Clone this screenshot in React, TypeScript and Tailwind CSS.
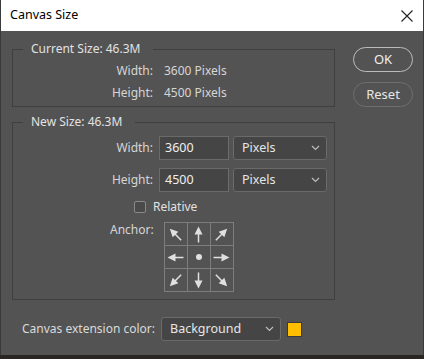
import React from "react";

const font = { fontFamily: '"Segoe UI", "Noto Sans", "Open Sans", sans-serif' };

function Chevron() {
  return (
    <svg width="9" height="6" viewBox="0 0 9 6" className="shrink-0">
      <path d="M1 1l3.5 3.5L8 1" fill="none" stroke="#bdbdbd" strokeWidth="1.2" />
    </svg>
  );
}

function Select({ value, className }: { value: string; className: string }) {
  return (
    <div
      className={`flex h-[24px] items-center justify-between rounded-[3px] border border-[#6a6a6a] bg-[#454545] pl-[8px] pr-[6px] text-[12.5px] text-[#e6e6e6] ${className}`}
    >
      <span>{value}</span>
      <Chevron />
    </div>
  );
}

// arrow pointing at the given angle, 0 = right
function Arrow({ angle }: { angle: number }) {
  return (
    <svg width="19" height="19" viewBox="-9.5 -9.5 19 19">
      <g transform={`rotate(${angle})`}>
        <line x1="-8" y1="0" x2="1" y2="0" stroke="#e0e0e0" strokeWidth="1.5" />
        <polygon points="8,0 0,-4 0,4" fill="#e0e0e0" />
      </g>
    </svg>
  );
}

function AnchorGrid() {
  const cells: (number | null)[] = [225, 270, 315, 180, null, 0, 135, 90, 45];
  return (
    <div className="grid grid-cols-[23px_23px_23px] border-l border-t border-[#7d7d7d]">
      {cells.map((a, i) => (
        <div
          key={i}
          className="flex h-[23px] w-[23px] items-center justify-center border-b border-r border-[#7d7d7d]"
        >
          {a === null ? (
            <div className="h-[6px] w-[6px] rounded-full bg-[#e0e0e0]" />
          ) : (
            <Arrow angle={a} />
          )}
        </div>
      ))}
    </div>
  );
}

export default function App() {
  return (
    <div className="h-[359px] w-[424px] overflow-hidden bg-[#2a2623]" style={font}>
      <div className="flex h-[355px] w-[424px] flex-col border-x border-[#3a3a3a] bg-[#535353]">
        {/* title bar */}
        <div className="flex h-[31px] items-center justify-between bg-white pl-[9px] pr-[8px] text-[12.5px] text-black">
          <span>Canvas Size</span>
          <svg width="14" height="14" viewBox="0 0 14 14" className="mr-[1px]">
            <path d="M1.5 1.5l11 11M12.5 1.5l-11 11" stroke="#222" strokeWidth="1.1" />
          </svg>
        </div>

        <div className="flex pl-[11px] pt-[10px]">
          {/* left column */}
          <div className="flex w-[323px] flex-col">
            <fieldset className="h-[66px] border border-[#3f3f3f]">
              <legend className="ml-[10px] px-[8px] pr-[13px] text-[12px] leading-[16px] text-[#e2e2e2]">
                Current Size: 46.3M
              </legend>
              <div className="grid grid-cols-[140px_1fr] gap-x-[11px] gap-y-[6px] pt-[6px] text-[12px] leading-[16px] text-[#d6d6d6]">
                <span className="text-right">Width:</span>
                <span>3600 Pixels</span>
                <span className="text-right">Height:</span>
                <span>4500 Pixels</span>
              </div>
            </fieldset>

            <fieldset className="mt-[7px] h-[186px] border border-[#3f3f3f]">
              <legend className="ml-[10px] px-[8px] pr-[13px] text-[12px] leading-[16px] text-[#e2e2e2]">
                New Size: 46.3M
              </legend>
              <div className="flex flex-col pt-[6px] text-[12px] text-[#d6d6d6]">
                <div className="flex items-center">
                  <span className="w-[140px] text-right">Width:</span>
                  <div className="ml-[6px] flex h-[24px] w-[70px] items-center border border-[#6a6a6a] bg-[#454545] pl-[5px] text-[12.5px] text-[#f0f0f0]">
                    3600
                  </div>
                  <Select value="Pixels" className="ml-[4px] w-[94px]" />
                </div>
                <div className="mt-[8px] flex items-center">
                  <span className="w-[140px] text-right">Height:</span>
                  <div className="ml-[6px] flex h-[24px] w-[70px] items-center border border-[#6a6a6a] bg-[#454545] pl-[5px] text-[12.5px] text-[#f0f0f0]">
                    4500
                  </div>
                  <Select value="Pixels" className="ml-[4px] w-[94px]" />
                </div>
                <div className="mt-[6px] flex items-center pl-[121px]">
                  <div className="h-[12px] w-[12px] rounded-[2px] border border-[#8a8a8a] bg-[#4a4a4a]" />
                  <span className="ml-[7px] text-[12px] text-[#e2e2e2]">Relative</span>
                </div>
                <div className="mt-[6px] flex items-start pl-[97px]">
                  <span className="mt-[-1px] text-[12px] text-[#d6d6d6]">Anchor:</span>
                  <div className="ml-[10px]">
                    <AnchorGrid />
                  </div>
                </div>
              </div>
            </fieldset>

            <div className="mt-[17px] flex items-center pl-[10px]">
              <span className="text-[12px] text-[#dadada]">Canvas extension color:</span>
              <Select value="Background" className="ml-[6px] w-[120px]" />
              <div className="ml-[6px] h-[15px] w-[15px] border border-[#3a3a3a] bg-[#ffbf00]" />
            </div>
          </div>

          {/* right column */}
          <div className="ml-[18px] flex flex-col gap-[10px] pt-[6px]">
            <div className="flex h-[25px] w-[60px] items-center justify-center rounded-full border border-[#bcbcbc] text-[13px] text-[#f0f0f0]">
              OK
            </div>
            <div className="flex h-[25px] w-[60px] items-center justify-center rounded-full border border-[#6e6e6e] text-[13px] text-[#e6e6e6]">
              Reset
            </div>
          </div>
        </div>
      </div>
    </div>
  );
}
